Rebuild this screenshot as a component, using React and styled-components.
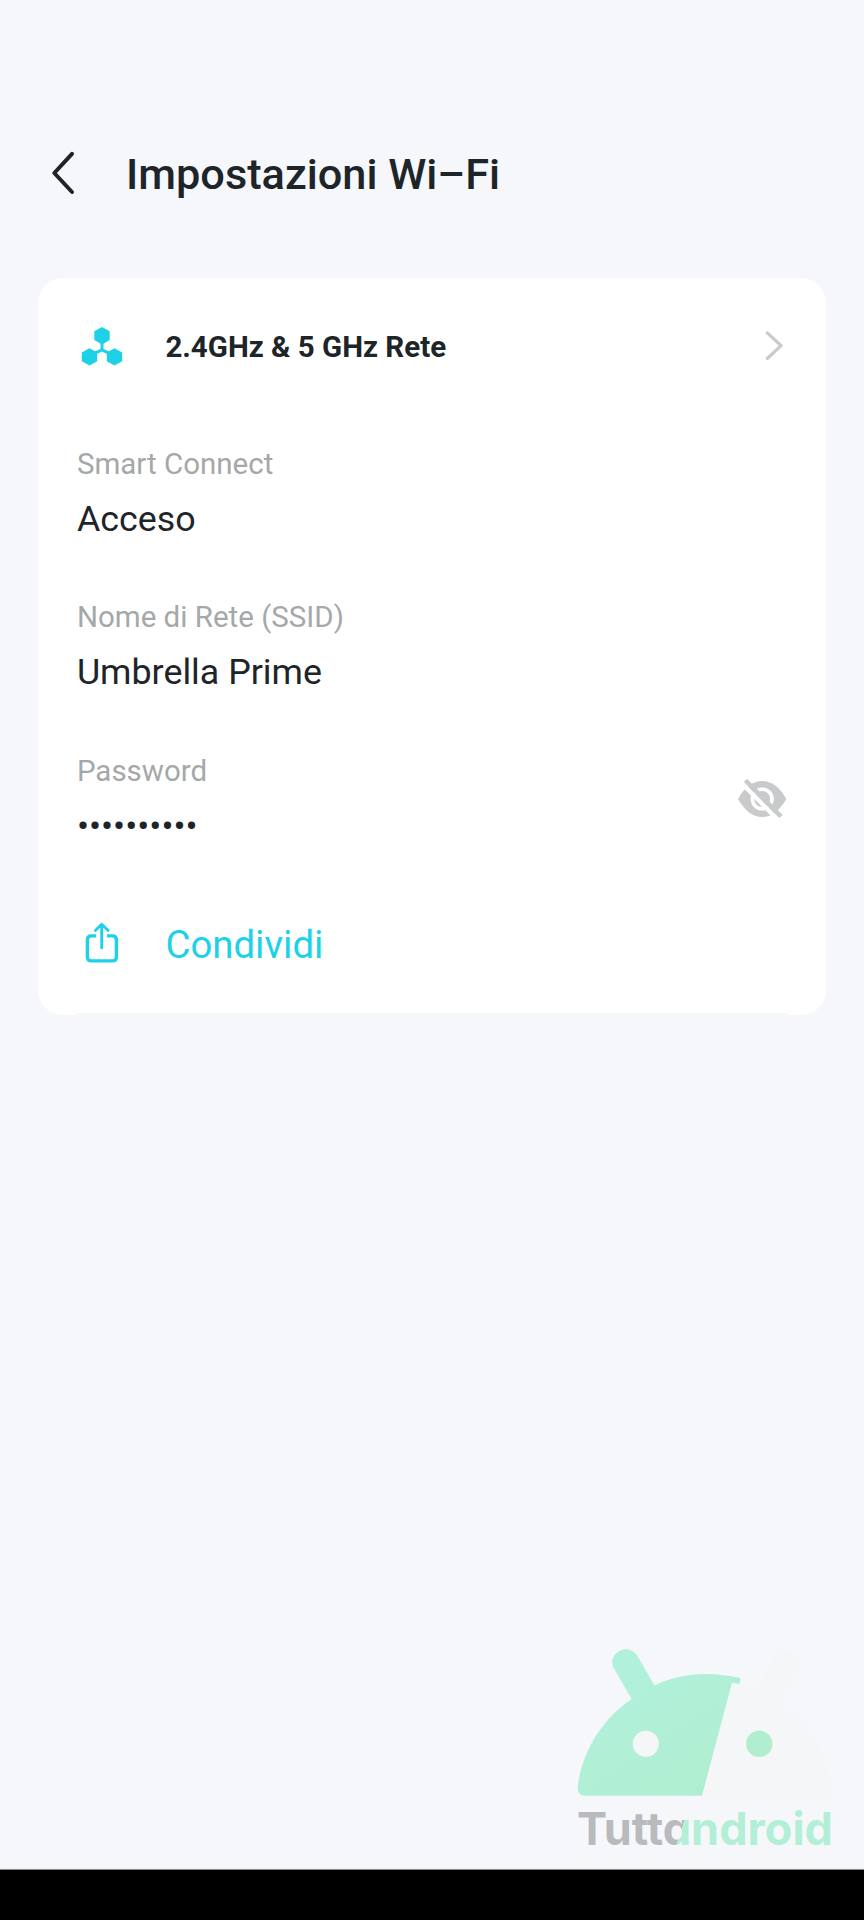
import React from "react";
import styled, { createGlobalStyle } from "styled-components";

const GlobalStyle = createGlobalStyle`
  *, *::before, *::after { box-sizing: border-box; }
  body { margin: 0; background: #f5f7fb; }
`;

const Screen = styled.div`
  display: flex;
  flex-direction: column;
  width: 864px;
  height: 1920px;
  background: #f5f7fb;
  color: #1e2529;
  font-family: Roboto, "Liberation Sans", sans-serif;
`;

const Header = styled.header`
  display: flex;
  align-items: center;
  gap: 46px;
  height: 180px;
  margin-top: 84px;
  padding-left: 46px;
`;

const BackButton = styled.button`
  display: flex;
  width: 34px;
  height: 50px;
  padding: 0;
  border: 0;
  background: none;
  color: inherit;
`;

const Title = styled.h1`
  margin: 2px 0 0;
  font-size: 43.3px;
  line-height: 52px;
  font-weight: 500;
  white-space: nowrap;
`;

const Card = styled.section`
  display: flex;
  flex-direction: column;
  width: 787.6px;
  height: 737px;
  margin: 14px 38.4px 0;
  padding: 0 38.5px;
  background: #fff;
  border-radius: 25px;
`;

const Row = styled.div`
  display: flex;
  align-items: center;
  height: ${(p) => p.$height}px;
`;

const IconSlot = styled.span`
  display: flex;
  width: 88.5px;
  flex: none;
`;

const NetworkName = styled.h2`
  flex: 1;
  margin: 0;
  font-size: 29.5px;
  font-weight: 700;
  line-height: 36px;
`;

const Field = styled.div`
  display: flex;
  align-items: center;
  justify-content: space-between;
  height: 153.5px;
`;

const FieldText = styled.div`
  display: flex;
  flex-direction: column;
  padding-top: 3px;
`;

const Label = styled.span`
  font-size: 29.5px;
  line-height: 36px;
  color: #a5a8a9;
`;

const Value = styled.span`
  margin-top: 15px;
  font-size: 35.8px;
  line-height: 44px;
`;

const ShareLabel = styled.span`
  margin-top: 2px;
  font-size: 38.4px;
  line-height: 46px;
  color: #1dd1e7;
`;

const CardEdge = styled.div`
  height: 2px;
  margin-top: auto;
  background: #f5f7fb;
`;

const Footer = styled.footer`
  display: flex;
  justify-content: flex-end;
  margin-top: auto;
`;

const NavigationBar = styled.div`
  height: 51px;
  flex: none;
  border-top: 1px solid #868789;
  background: #000;
`;

const BackIcon = () => (
  <svg width="34" height="50" viewBox="0 0 34 50" fill="none" stroke="currentColor" strokeWidth="4" strokeLinecap="round" strokeLinejoin="round">
    <path d="M26 4.8 8.3 24 26 43" />
  </svg>
);

const MeshIcon = () => (
  <svg width="50" height="50" viewBox="0.5 1.2 50 50" fill="#1dd1e7">
    <path d="M25.5 6.2 33.2 10.4V19.2L25.5 23.6 17.8 19.2V10.4ZM13 27.4 20.7 31.7V40.5L13 44.8 5.3 40.5V31.7ZM38 27.4 45.7 31.7V40.5L38 44.8 30.3 40.5V31.7Z" />
    <path d="M25.5 20V29M18 32.5 25.5 29 33 32.5" fill="none" stroke="#1dd1e7" strokeWidth="3" />
  </svg>
);

const ChevronIcon = () => (
  <svg width="24" height="36" viewBox="1.2 1.5 24 36" fill="none" stroke="#c8cacb" strokeWidth="3.2" strokeLinecap="round" strokeLinejoin="round">
    <path d="M5.5 5.4 19.3 18.2 5.5 31" />
  </svg>
);

const HiddenIcon = () => (
  <svg width="50" height="40" viewBox="0 0 50 40">
    <path d="M1 20Q11 2 25.2 2T49.3 20Q39 38 25.2 38T1 20Z" fill="#c8cacb" />
    <circle cx="25.2" cy="20" r="9.8" fill="none" stroke="#fff" strokeWidth="3.6" />
    <path d="M5 4.5 40 40" stroke="#fff" strokeWidth="4.2" />
    <path d="M8.5 1.5 44 37.5" stroke="#c8cacb" strokeWidth="4.6" />
  </svg>
);

const ShareIcon = () => (
  <svg width="50" height="50" viewBox="0.6 0.6 50 50" fill="none" stroke="#1dd1e7" strokeWidth="3.4" strokeLinecap="round" strokeLinejoin="round">
    <path d="M19.8 17.5H15Q11 17.5 11 21.5V38.5Q11 42.5 15 42.5H36Q40 42.5 40 38.5V21.5Q40 17.5 36 17.5H30.5" strokeLinecap="butt" />
    <path d="M25.3 29.5V6M19 12 25.3 5.8 31.8 12" strokeWidth="2.8" />
  </svg>
);

const Watermark = () => (
  <svg width="304" height="239" viewBox="0 0 304 239">
    <defs>
      <linearGradient id="head" x1="60" y1="20" x2="160" y2="170" gradientUnits="userSpaceOnUse">
        <stop stopColor="#b1f1dc" />
        <stop offset="1" stopColor="#b1eed0" />
      </linearGradient>
      <linearGradient id="word" x1="119" y1="200" x2="123" y2="201.3" gradientUnits="userSpaceOnUse">
        <stop offset=".5" stopColor="#b9babc" />
        <stop offset=".5" stopColor="#b2efd5" />
      </linearGradient>
    </defs>
    <path d="M172 52.7Q184 54.5 196 59L213 29C221 15.5 243 24 237.5 39L219 73C250 95 268 125 272 160Q273 171 264 171H140L142 164Z" fill="#f4f6f7" />
    <path d="M142 165.7H25Q17 165.7 17.8 156.5C22 121 43 88 71.7 69L53.7 38C46.5 24 67 11 77.2 25.5L94.5 55.5C122 42 149 42 178.5 47.4Q181 48 180.5 49.8L179.5 54 172 52.7Z" fill="url(#head)" />
    <circle cx="85.8" cy="113.8" r="13.1" fill="#f4f6f8" />
    <circle cx="199.3" cy="113.8" r="13.2" fill="#b1eed0" />
    <text x="17" y="214.5" textLength="256" lengthAdjust="spacingAndGlyphs" fill="url(#word)" fontFamily="Inter, sans-serif" fontSize="45" fontWeight="700" style={{ fontFeatureSettings: '"cv11"' }}>Tuttandroid</text>
  </svg>
);

export default function App() {
  return (
    <Screen>
      <GlobalStyle />
      <Header>
        <BackButton aria-label="Indietro"><BackIcon /></BackButton>
        <Title>Impostazioni Wi–Fi</Title>
      </Header>
      <Card>
        <Row $height={137}>
          <IconSlot><MeshIcon /></IconSlot>
          <NetworkName>2.4GHz &amp; 5 GHz Rete</NetworkName>
          <ChevronIcon />
        </Row>
        <Field>
          <FieldText><Label>Smart Connect</Label><Value>Acceso</Value></FieldText>
        </Field>
        <Field>
          <FieldText><Label>Nome di Rete (SSID)</Label><Value>Umbrella Prime</Value></FieldText>
        </Field>
        <Field>
          <FieldText><Label>Password</Label><Value>••••••••••</Value></FieldText>
          <HiddenIcon />
        </Field>
        <Row $height={136}>
          <IconSlot><ShareIcon /></IconSlot>
          <ShareLabel>Condividi</ShareLabel>
        </Row>
        <CardEdge />
      </Card>
      <Footer><Watermark /></Footer>
      <NavigationBar />
    </Screen>
  );
}
